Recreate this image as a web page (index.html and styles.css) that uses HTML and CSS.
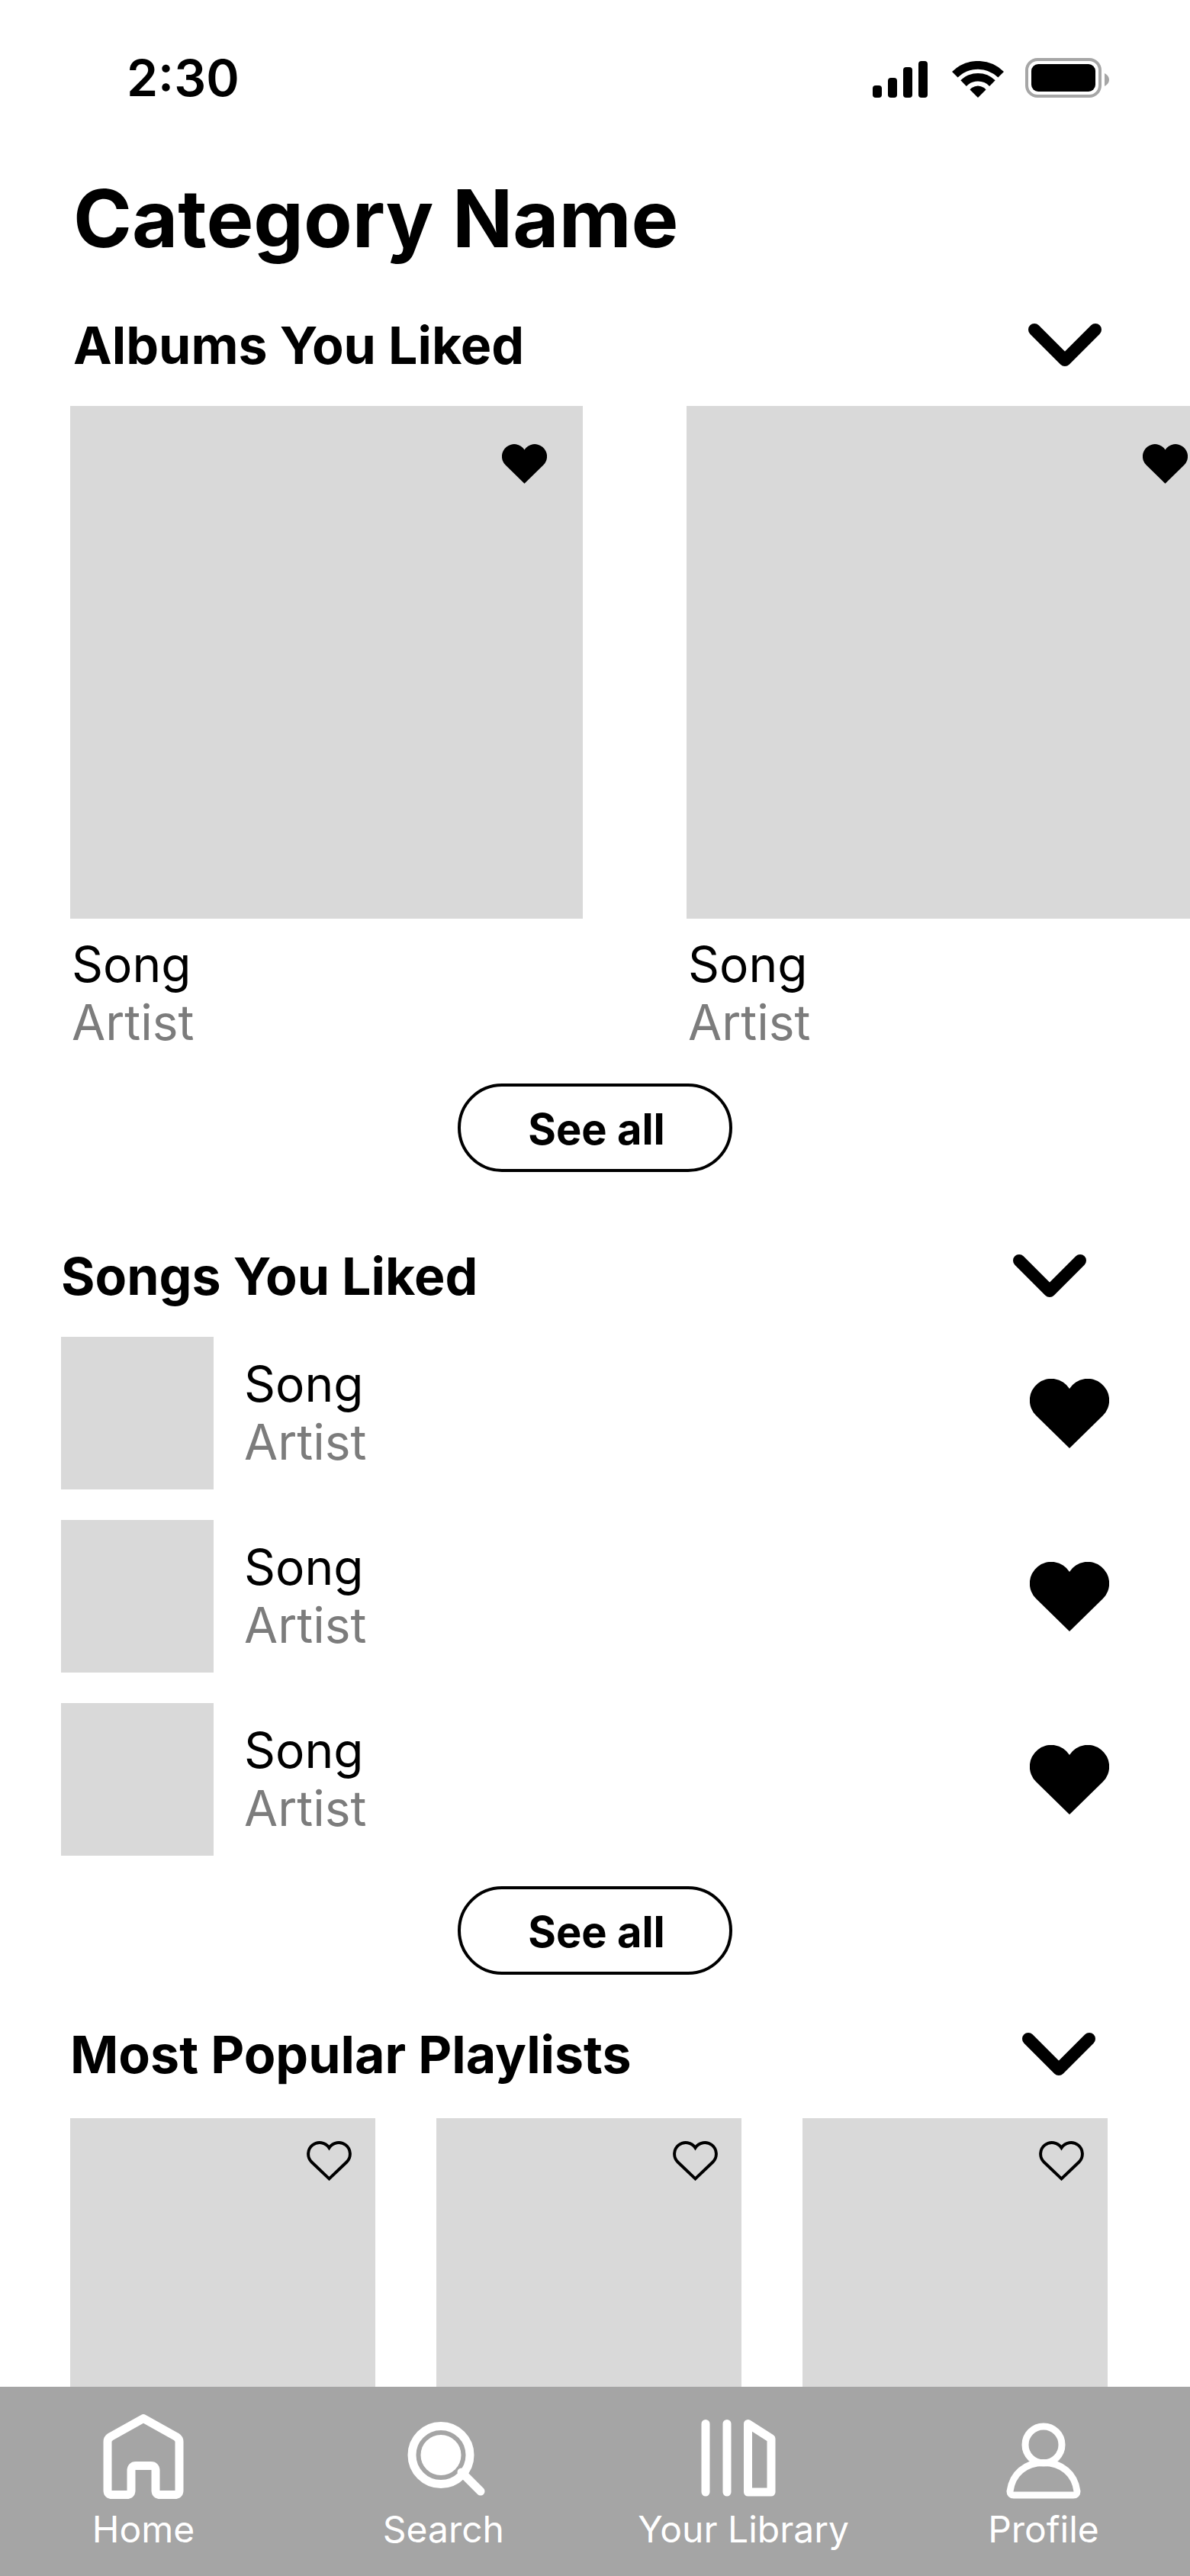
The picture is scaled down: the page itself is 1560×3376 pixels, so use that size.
FILE: index.html
```html
<!DOCTYPE html>
<html lang="en">

<head>
  <meta charset="UTF-8" />
  <meta name="viewport" content="width=device-width, initial-scale=1.0" />
  <title>Category Name</title>
  <link rel="stylesheet" href="styles.css">
</head>

<body>
  <!-- shared icons -->
  <svg class="sprite" aria-hidden="true">
    <symbol id="chevron" viewBox="0 0 96 56">
      <path d="M8 8L48 48L88 8" fill="none" stroke="currentColor" stroke-width="16" stroke-linecap="round" stroke-linejoin="round" />
    </symbol>
    <symbol id="heart" viewBox="0 0 104 91">
      <path d="M52 91L8.3 48.3A28.3 28.3 0 1 1 52 12.9A28.3 28.3 0 1 1 95.7 48.3Z" fill="currentColor" />
    </symbol>
    <symbol id="heart-outline" viewBox="-4 -4 112 99">
      <path d="M52 90L8.3 48.3A28.3 28.3 0 1 1 52 12.9A28.3 28.3 0 1 1 95.7 48.3Z" fill="none" stroke="currentColor" stroke-width="7.5" />
    </symbol>
  </svg>

  <header class="status-bar">
    <span class="time">2:30</span>
    <div class="status-icons">
      <svg width="72" height="48" viewBox="0 0 72 48">
        <rect x="0" y="32" width="12" height="16" rx="4" />
        <rect x="20" y="22" width="12" height="26" rx="4" />
        <rect x="40" y="8" width="12" height="40" rx="4" />
        <rect x="60" y="0" width="12" height="48" rx="4" />
      </svg>
      <svg width="72" height="48" viewBox="-4 0 72 48">
        <path d="M3.8 17.8A42.7 42.7 0 0 1 64.2 17.8M15.1 29.1A26.7 26.7 0 0 1 52.9 29.1" fill="none" stroke="#000" stroke-width="10.7" />
        <path d="M34 48L23.5 37.5Q24 36.5 26 35Q34 30 42 35Q44 36.5 44.5 37.5Z" />
      </svg>
      <svg width="110" height="52" viewBox="0 0 110 52">
        <rect x="2" y="2" width="96" height="48" rx="14" fill="none" stroke="#a6a6a6" stroke-width="4" />
        <rect x="8" y="8" width="84" height="36" rx="9" />
        <path d="M104 20C108 22 110 25 110 28.5C110 32 108 35 104 37Z" fill="#a6a6a6" />
      </svg>
    </div>
  </header>

  <main>
    <h1>Category Name</h1>

    <section class="albums">
      <div class="section-header">
        <h2>Albums You Liked</h2>
        <button class="icon-btn" aria-label="Collapse albums"><svg width="96" height="56"><use href="#chevron" /></svg></button>
      </div>
      <div class="album-list">
        <article class="album">
          <div class="cover">
            <button class="icon-btn like" aria-label="Unlike"><svg width="59" height="52"><use href="#heart" /></svg></button>
          </div>
          <div class="info">
            <p>Song</p>
            <p class="artist">Artist</p>
          </div>
        </article>
        <article class="album album-peek">
          <div class="cover">
            <button class="icon-btn like" aria-label="Unlike"><svg width="59" height="52"><use href="#heart" /></svg></button>
          </div>
          <div class="info">
            <p>Song</p>
            <p class="artist">Artist</p>
          </div>
        </article>
      </div>
      <button class="see-all">See all</button>
    </section>

    <section class="songs">
      <div class="section-header">
        <h2>Songs You Liked</h2>
        <button class="icon-btn" aria-label="Collapse songs"><svg width="96" height="56"><use href="#chevron" /></svg></button>
      </div>
      <ul class="song-list">
        <li>
          <div class="thumb"></div>
          <div class="info">
            <p>Song</p>
            <p class="artist">Artist</p>
          </div>
          <button class="icon-btn" aria-label="Unlike"><svg width="104" height="91"><use href="#heart" /></svg></button>
        </li>
        <li>
          <div class="thumb"></div>
          <div class="info">
            <p>Song</p>
            <p class="artist">Artist</p>
          </div>
          <button class="icon-btn" aria-label="Unlike"><svg width="104" height="91"><use href="#heart" /></svg></button>
        </li>
        <li>
          <div class="thumb"></div>
          <div class="info">
            <p>Song</p>
            <p class="artist">Artist</p>
          </div>
          <button class="icon-btn" aria-label="Unlike"><svg width="104" height="91"><use href="#heart" /></svg></button>
        </li>
      </ul>
      <button class="see-all">See all</button>
    </section>

    <section class="playlists">
      <div class="section-header">
        <h2>Most Popular Playlists</h2>
        <button class="icon-btn" aria-label="Collapse playlists"><svg width="96" height="56"><use href="#chevron" /></svg></button>
      </div>
      <div class="playlist-grid">
        <div class="playlist">
          <button class="icon-btn like" aria-label="Like"><svg width="59" height="52"><use href="#heart-outline" /></svg></button>
        </div>
        <div class="playlist">
          <button class="icon-btn like" aria-label="Like"><svg width="59" height="52"><use href="#heart-outline" /></svg></button>
        </div>
        <div class="playlist">
          <button class="icon-btn like" aria-label="Like"><svg width="59" height="52"><use href="#heart-outline" /></svg></button>
        </div>
      </div>
    </section>
  </main>

  <nav class="tab-bar">
    <a href="#">
      <svg width="112" height="112" viewBox="0 0 112 112">
        <path d="M56 5.5L99 29.5Q103 32 103 36V100Q103 105.5 97 105.5H78Q72 105.5 72 100V74Q72 67.5 66 67.5H46Q40 67.5 40 74V100Q40 105.5 34 105.5H15Q9 105.5 9 100V36Q9 32 13 29.5Z" />
      </svg>
      <span>Home</span>
    </a>
    <a href="#">
      <svg width="112" height="112" viewBox="0 0 112 112">
        <circle cx="53" cy="53.5" r="38" />
        <circle class="solid" cx="53" cy="53.5" r="26.5" />
        <path d="M80 76L105 101" />
      </svg>
      <span>Search</span>
    </a>
    <a href="#">
      <svg width="112" height="112" viewBox="0 0 112 112">
        <path d="M6 12.5V102M34 12.5V102M61.5 12.5L92 32V102H61.5Z" />
      </svg>
      <span>Your Library</span>
    </a>
    <a href="#">
      <svg class="thin" width="112" height="112" viewBox="0 0 112 112">
        <circle cx="56" cy="40" r="24" />
        <path d="M12 101C15 78 32 63.5 56 63.5S97 78 100 101Q100 106 95 106H17Q12 106 12 101Z" />
      </svg>
      <span>Profile</span>
    </a>
  </nav>
</body>

</html>
```
FILE: styles.css
```css
* {
  box-sizing: border-box;
}

body {
  margin: 0;
  min-height: 100vh;
  background: #fff;
  color: #000;
  font-family: Inter, "Liberation Sans", sans-serif;
}

h1,
h2,
p {
  margin: 0;
}

svg {
  display: block;
}

.sprite {
  position: absolute;
  width: 0;
  height: 0;
}

.icon-btn {
  appearance: none;
  border: none;
  background: none;
  padding: 0;
  color: inherit;
  cursor: pointer;
}

/* status bar */
.status-bar {
  display: flex;
  justify-content: space-between;
  align-items: center;
  padding: 60px 106px 0 166px;
}

.time {
  font-size: 66px;
  line-height: 84px;
  font-weight: 600;
}

.status-icons {
  display: flex;
  align-items: flex-end;
  gap: 28px;
}

main {
  padding-bottom: 200px;
}

h1 {
  padding: 78px 96px 0;
  font-size: 104px;
  line-height: 128px;
  font-weight: 700;
}

/* sections */
.section-header {
  display: flex;
  justify-content: space-between;
  align-items: center;
  padding-bottom: 38px;
}

h2 {
  font-size: 68px;
  line-height: 84px;
  font-weight: 700;
}

.info {
  font-size: 64px;
  line-height: 76px;
  font-weight: 400;
}

.artist {
  color: #7c7c7c;
}

.see-all {
  display: block;
  width: 360px;
  height: 116px;
  margin: 40px auto 0;
  padding: 4px 0 0 4px;
  border: 4px solid #000;
  border-radius: 58px;
  background: #fff;
  color: #000;
  font-family: inherit;
  font-size: 56px;
  line-height: 68px;
  font-weight: 700;
  cursor: pointer;
}

/* albums */
.albums {
  padding-top: 60px;
}

.albums .section-header {
  padding-left: 96px;
  padding-right: 116px;
}

.album-list {
  display: flex;
  gap: 136px;
  padding-left: 92px;
  overflow-x: auto;
  scrollbar-width: none;
}

.album {
  flex: none;
  width: 672px;
}

.album .info {
  padding: 22px 2px 2px;
}

.cover {
  position: relative;
  aspect-ratio: 1;
  background: #d9d9d9;
}

.cover .like {
  position: absolute;
  top: 50px;
  right: 47px;
}

.album-peek .like {
  right: 15px;
}

/* songs */
.songs {
  padding-top: 94px;
}

.songs .section-header {
  padding-left: 80px;
  padding-right: 136px;
}

.song-list {
  display: flex;
  flex-direction: column;
  gap: 40px;
  margin: 0;
  padding: 0 106px 0 80px;
  list-style: none;
}

.song-list li {
  display: flex;
  align-items: center;
  gap: 40px;
}

.song-list .info {
  flex: 1;
}

.thumb {
  width: 200px;
  height: 200px;
  background: #d9d9d9;
}

/* playlists */
.playlists {
  padding-top: 62px;
}

.playlists .section-header {
  padding-left: 92px;
  padding-right: 124px;
  padding-bottom: 42px;
}

.playlist-grid {
  display: grid;
  grid-template-columns: repeat(3, 1fr);
  gap: 80px;
  padding: 0 108px 0 92px;
}

.playlist {
  position: relative;
  aspect-ratio: 1;
  background: #d9d9d9;
}

.playlist .like {
  position: absolute;
  top: 30px;
  right: 31px;
}

/* bottom tabs */
.tab-bar {
  position: fixed;
  left: 0;
  right: 0;
  bottom: 0;
  display: flex;
  justify-content: space-between;
  height: 248px;
  padding: 36px 54px 0 50px;
  background: #a5a5a5;
}

.tab-bar a {
  display: flex;
  flex-direction: column;
  align-items: center;
  gap: 10px;
  width: 276px;
  color: #fff;
  font-size: 48px;
  line-height: 58px;
  font-weight: 400;
  text-decoration: none;
  white-space: nowrap;
}

.tab-bar svg {
  fill: none;
  stroke: #fff;
  stroke-width: 11;
  stroke-linecap: round;
  stroke-linejoin: round;
}

.tab-bar .thin {
  stroke-width: 9;
}

.tab-bar .solid {
  fill: #fff;
  stroke: none;
}
```
